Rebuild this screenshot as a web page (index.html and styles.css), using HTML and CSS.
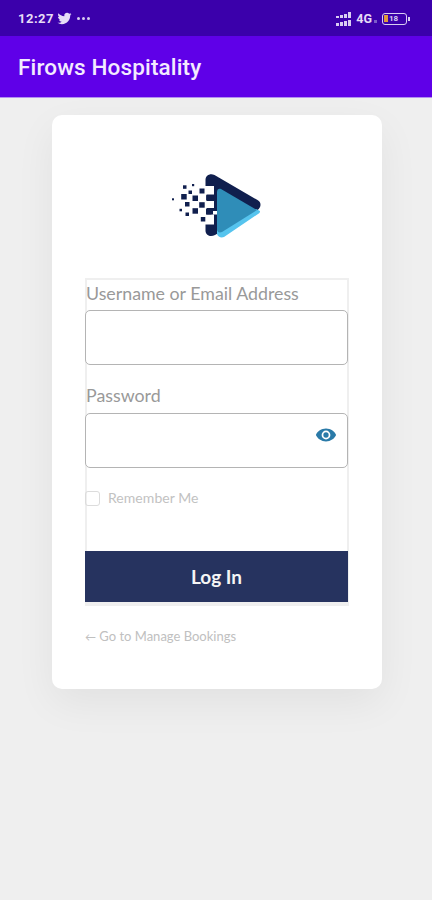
FILE: index.html
```html
<!DOCTYPE html>
<html lang="en">
<head>
<meta charset="utf-8">
<title>Firows Hospitality</title>
<link rel="stylesheet" href="styles.css">
</head>
<body>
<header class="status">
  <div class="status-left">
    <span class="time">12:27</span>
    <svg class="bird" viewBox="0 0 24 24"><path d="M23 4.900c-.8.4-1.700.6-2.600.7.900-.6 1.600-1.400 2-2.500-.9.500-1.800.9-2.900 1.100A4.600 4.600 0 0 0 11.700 8.400C7.900 8.200 4.500 6.400 2.300 3.600c-1.200 2.100-.6 4.800 1.400 6.100-.7 0-1.400-.2-2.100-.6 0 2.200 1.600 4.200 3.700 4.600-.7.200-1.400.2-2.100.1.600 1.900 2.300 3.200 4.300 3.200A9.300 9.300 0 0 1 .8 18.900 13.100 13.100 0 0 0 7.900 21c8.600 0 13.500-7.300 13.200-13.800.9-.6 1.700-1.400 1.900-2.300z"/></svg>
    <span class="dots"><i></i><i></i><i></i></span>
  </div>
  <div class="status-right">
    <svg class="signal" viewBox="0 0 17 14"><path d="M13 0h3v6h-3zM13 8h3v6h-3zM9 2h3v4H9zM9 9h3v5H9zM5 3h3v3H5zM5 10h3v4H5zM1 4h3v2H1zM1 11h3v3H1z"/></svg>
    <span class="net">4G</span>
    <span class="tiny"></span>
    <span class="battery"><span class="level"></span><span class="pct">18</span></span>
    <span class="nub"></span>
  </div>
</header>
<div class="appbar"><h1>Firows Hospitality</h1></div>
<main class="page">
  <section class="card">
    <svg class="logo" viewBox="0 0 92 66">
      <path class="logo-navy" d="M35.500 6c0-5 5-7 9-5l43 25c4 2 4 7 0 10L45 61c-4 2-9 1-9.500-4z"/>
      <path class="logo-light" d="M47 54l39-19 4 2c0 1 0 2-2 3L54 63c-3 1-6 0-7-3z"/>
      <path class="logo-blue" d="M47 18c0-3 2-4 4-3l36 21-35 22c-3 1-5 0-5-3z"/>
      <g class="logo-white">
        <rect x="35" y="12" width="9" height="8.500"/>
        <rect x="35" y="20" width="1.500" height="8"/>
        <rect x="35" y="27" width="9" height="7"/>
        <rect x="35" y="34" width="1.500" height="7"/>
        <rect x="35" y="40.500" width="9" height="10"/>
        <rect x="43" y="37" width="4" height="3.500"/>
      </g>
      <g class="logo-navy">
        <rect x="13" y="11.300" width="3.500" height="3.500"/>
        <rect x="22" y="10" width="2.200" height="2.200"/>
        <rect x="18.500" y="16.500" width="3.500" height="3.500"/>
        <rect x="29.500" y="14.500" width="5" height="5"/>
        <rect x="11.200" y="20" width="5.500" height="5.500"/>
        <rect x="22.500" y="21.500" width="5.500" height="5.500"/>
        <rect x="36.200" y="21.200" width="5" height="5"/>
        <rect x="15" y="28" width="4.500" height="4.500"/>
        <rect x="29.200" y="28.200" width="5.500" height="5.500"/>
        <rect x="22.500" y="34.200" width="5.500" height="5.500"/>
        <rect x="36" y="35" width="5.500" height="5.500"/>
        <rect x="9.500" y="34.800" width="2.500" height="2.500"/>
        <rect x="15.500" y="38.500" width="3.500" height="3.500"/>
        <rect x="30.800" y="43" width="4.500" height="4.500"/>
        <rect x="2" y="24.300" width="2" height="2"/>
      </g>
    </svg>
    <form class="form">
      <label class="label" for="user">Username or Email Address</label>
      <input class="input" id="user" type="text">
      <label class="label label-pass" for="pass">Password</label>
      <div class="pass-wrap">
        <input class="input input-pass" id="pass" type="password">
        <svg class="eye" viewBox="0 0 24 24"><path d="M12 5C7 5 2.700 8 1 12c1.700 4 6 7 11 7s9.300-3 11-7c-1.700-4-6-7-11-7zm0 11.800a4.800 4.800 0 1 1 0-9.600 4.800 4.800 0 0 1 0 9.600zm0-7.700a2.900 2.900 0 1 0 0 5.800 2.900 2.900 0 0 0 0-5.800z"/></svg>
      </div>
      <div class="remember"><span class="check"></span><span>Remember Me</span></div>
      <button class="login" type="button">Log In</button>
    </form>
    <p class="back"><span class="arrow">←</span> Go to Manage Bookings</p>
  </section>
</main>
</body>
</html>
```
FILE: styles.css
```css
* { box-sizing: border-box; }
html, body { margin: 0; height: 100%; }
body { width: 432px; height: 900px; overflow: hidden; background: #efefef; font-family: Lato, sans-serif; }

.status { height: 36px; background: #3b00ab; display: flex; justify-content: space-between; align-items: center; padding: 1px 22px 0 18px; color: #e6dcf7; }
.status-left, .status-right { display: flex; align-items: center; }
.time { font: 700 13px Roboto, sans-serif; letter-spacing: .5px; }
.bird { width: 15px; height: 15px; margin-left: 3px; fill: #e6dcf7; }
.dots { display: flex; gap: 2px; margin-left: 5px; }
.dots i { width: 3px; height: 3px; border-radius: 50%; background: #d8ccf0; }
.signal { width: 17px; height: 14px; fill: #d9cdf2; }
.net { font: 700 12.500px Roboto, sans-serif; margin-left: 4px; }
.tiny { width: 3px; height: 3px; margin: 5px 5px 0 2px; background: #7a5cc8; }
.battery { width: 25px; height: 12px; border: 1.500px solid #d9cdf2; border-radius: 3px; display: flex; align-items: center; gap: 1px; padding: 1px; }
.level { width: 4px; height: 7px; background: #e09a3c; }
.pct { font: 700 8px/8px Roboto, sans-serif; color: #d9cdf2; }
.nub { width: 2px; height: 4px; margin-left: 1px; background: #d9cdf2; }

.appbar { height: 62px; background: #5f00e8; border-bottom: 1px solid #b28ff0; display: flex; align-items: center; padding: 0 18px; }
.appbar h1 { margin: 0; color: #f3ebff; font: 500 22.500px Roboto, sans-serif; letter-spacing: .15px; }

.page { padding: 17px 50px 0 52px; }
.card { width: 330px; height: 574px; background: #fff; border-radius: 10px; box-shadow: 0 14px 40px rgba(0, 0, 0, .06); padding: 59px 33px 0; display: flex; flex-direction: column; }
.logo { display: block; width: 92px; height: 66px; align-self: center; margin-right: 2px; }
.logo-navy { fill: #101f4e; }
.logo-light { fill: #56c4ee; }
.logo-blue { fill: #2f8db8; }
.logo-white { fill: #fff; }

.form { margin-top: 38px; height: 328px; width: 264px; border: 2px solid #efefef; border-bottom-width: 4px; display: flex; flex-direction: column; }
.label { font-size: 17.800px; line-height: 26px; color: #999; margin: 0 0 4px -1px; }
.label-pass { margin-top: 17px; }
.input { display: block; width: 263px; height: 56px; background: #fff; border: 1px solid #b4b4b4; border-radius: 5px; margin-left: -2px; outline: none; }
.input-pass { height: 55px; margin-top: 1px; }
.pass-wrap { position: relative; }
.eye { position: absolute; left: 228px; top: 12px; width: 22px; height: 22px; fill: #2a7aa8; }
.remember { display: flex; align-items: center; margin: 21px 0 0 -2px; font-size: 14px; line-height: 18px; color: #c2c2c2; letter-spacing: .05px; }
.check { width: 15px; height: 15px; border: 1px solid #dcdcdc; border-radius: 3px; margin-right: 8px; }
.login { margin: 44px 0 0 -2px; width: 263px; height: 51px; background: #26335f; border: 0; color: #f5f5f5; font: 700 19px Lato, sans-serif; }
.back { margin: 21px 0 0; font-size: 13px; line-height: 18px; color: #c0c0c0; }
.arrow { font-size: 11px; }
```
